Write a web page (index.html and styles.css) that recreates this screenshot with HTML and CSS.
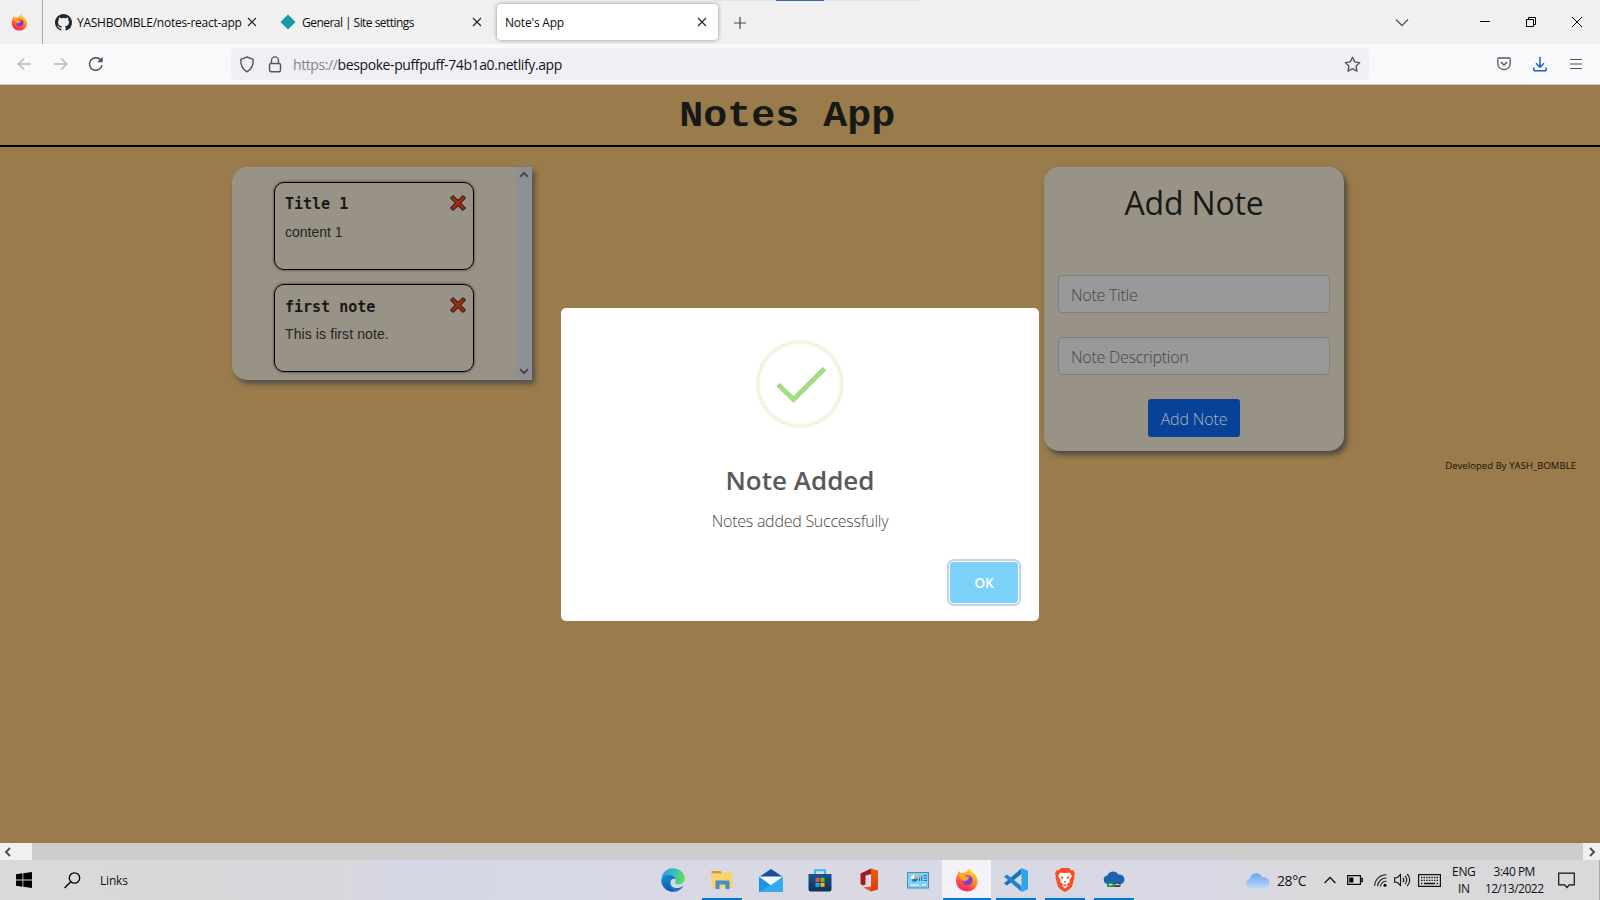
FILE: index.html
```html
<!DOCTYPE html>
<html lang="en">
<head>
<meta charset="utf-8">
<title>Note's App</title>
<link rel="stylesheet" href="styles.css">
</head>
<body>
<svg class="defs" width="0" height="0" aria-hidden="true">
  <defs>
    <linearGradient id="ffBody" x1=".8" y1="0" x2=".3" y2="1"><stop offset="0" stop-color="#ffe83c"/><stop offset=".4" stop-color="#ff9a22"/><stop offset=".75" stop-color="#ff4646"/><stop offset="1" stop-color="#ee247c"/></linearGradient>
    <linearGradient id="ffCore" x1="0" y1="1" x2="1" y2="0"><stop offset="0" stop-color="#5b4bdc"/><stop offset="1" stop-color="#a02bd0"/></linearGradient>
    <linearGradient id="edgeA" x1="0" y1=".2" x2="1" y2=".4"><stop offset="0" stop-color="#239be0"/><stop offset=".5" stop-color="#2fc0c4"/><stop offset="1" stop-color="#5fdc5c"/></linearGradient>
    <linearGradient id="edgeB" x1="0" y1="0" x2=".6" y2="1"><stop offset="0" stop-color="#1694dc"/><stop offset="1" stop-color="#0c4f9e"/></linearGradient>
    <linearGradient id="office" x1="0" y1="0" x2="0" y2="1"><stop offset="0" stop-color="#f0600e"/><stop offset="1" stop-color="#d43d0a"/></linearGradient>
    <linearGradient id="cloud" x1="0" y1="0" x2="0" y2="1"><stop offset="0" stop-color="#6ea4ef"/><stop offset="1" stop-color="#b9d6fa"/></linearGradient>
    <linearGradient id="store" x1="0" y1="0" x2="0" y2="1"><stop offset="0" stop-color="#16568f"/><stop offset="1" stop-color="#12305a"/></linearGradient>
    <symbol id="firefox" viewBox="0 0 24 24">
      <path fill="url(#ffBody)" d="M15.2.8c.2 1.500 1.400 2.600 2.400 3.600 2.300 1.500 4.900 4.600 5 8.300C22.700 19 18 23.400 12 23.400 5.800 23.400 1 18.800 1 12.600c0-3 .8-5.600 2.100-7.400 0-1 .2-1.700.8-2.300.4 1 1 1.600 1.800 2.100 1-.3 2.100-.4 3.200-.2C9.900 4 10.800 3.800 11.600 4c.2-1.700 1.800-2.600 3.600-3.200z"/>
      <path fill="url(#ffCore)" d="M8.300 8.500c2.500-1.500 5.200-1.700 7.300-.3 2.200 1.600 2.700 4.600 1.200 6.800-1.700 2.400-5.100 3-7.600 1.300-1.300-.9-2-2.200-2-3.400 1.800.9 3.700.8 4.700-.4.700-.9 1.700-1.200 1.500-1.800-.4-.9-2.600-.4-3.300-1-.6-.5-.8-1-1.800-1.200z"/>
      <path fill="#ffb52e" d="M2.500 7c2-1.300 4.700-1.300 6.200.3.800.8 2.500 1.100 4.600 1.200 1 .1 1.200 1.500.3 1.900-1.400.6-2 .8-2.300 1.700-2.100.9-4.100.4-5-1z" opacity=".75"/>
    </symbol>
    <symbol id="close" viewBox="0 0 10 10"><path d="M1 1l8 8M9 1l-8 8" fill="none" stroke="#222" stroke-width="1.100"/></symbol>
    <symbol id="cross" viewBox="0 0 18 18"><path d="M4 1.500L9 6.300 14 1.500 16.500 4 11.700 9 16.500 14 14 16.500 9 11.700 4 16.500 1.500 14 6.300 9 1.500 4z" fill="#992b17" stroke="#1c0f0a" stroke-width="1" stroke-linejoin="round"/></symbol>
  </defs>
</svg>
<div class="screen">
  <header class="tabs">
    <div class="pinned"><svg width="17" height="17"><use href="#firefox"/></svg></div>
    <div class="tab tab-github">
      <svg width="17" height="17" viewBox="0 0 16 16"><path fill="#24292f" d="M8 0C3.580 0 0 3.580 0 8c0 3.540 2.290 6.530 5.470 7.590.4.070.55-.17.55-.38 0-.19-.01-.82-.01-1.490-2.010.37-2.530-.49-2.690-.94-.09-.23-.48-.94-.82-1.130-.28-.15-.68-.52-.01-.53.63-.01 1.080.58 1.230.82.72 1.210 1.870.87 2.330.66.07-.52.28-.87.51-1.070-1.780-.2-3.640-.89-3.640-3.950 0-.87.31-1.590.82-2.150-.08-.2-.36-1.020.08-2.120 0 0 .67-.21 2.200.82.64-.18 1.320-.27 2-.27s1.360.09 2 .27c1.530-1.040 2.200-.82 2.200-.82.44 1.100.16 1.920.08 2.120.51.56.82 1.270.82 2.150 0 3.070-1.870 3.750-3.650 3.950.29.25.54.73.54 1.480 0 1.070-.01 1.930-.01 2.200 0 .21.15.46.55.38A8.010 8.010 0 0 0 16 8c0-4.420-3.580-8-8-8z"/></svg>
      <span class="t-github">YASHBOMBLE/notes-react-app</span>
      <svg class="x" width="10" height="10"><use href="#close"/></svg>
    </div>
    <div class="tab tab-netlify">
      <svg width="16" height="16" viewBox="0 0 16 16"><path d="M8 .5L15.500 8 8 15.500.5 8z" fill="#159ba5"/></svg>
      <span class="t-netlify">General | Site settings</span>
      <svg class="x" width="10" height="10"><use href="#close"/></svg>
    </div>
    <div class="tab tab-active"><span class="t-active">Note's App</span><svg class="x" width="10" height="10"><use href="#close"/></svg></div>
    <svg class="plus" width="12" height="12" viewBox="0 0 12 12"><path d="M6 0v12M0 6h12" stroke="#444" stroke-width="1.200"/></svg>
    <div class="window-buttons">
      <svg width="14" height="9" viewBox="0 0 14 9"><path d="M1 1.500l6 6 6-6" fill="none" stroke="#555" stroke-width="1.300"/></svg>
      <svg class="min" width="10" height="10" viewBox="0 0 10 10"><path d="M0 4.500h10" stroke="#000"/></svg>
      <svg class="restore" width="10" height="10" viewBox="0 0 10 10"><path d="M.5 2.500h7v7h-7zM2.500 2.500v-2h7v7h-2" fill="none" stroke="#000"/></svg>
      <svg class="quit" width="10" height="10" viewBox="0 0 10 10"><path d="M0 0l10 10M10 0L0 10" stroke="#000"/></svg>
    </div>
    <i class="edge-line"></i><i class="edge-accent"></i>
  </header>
  <nav class="toolbar">
    <svg class="back" width="15" height="14" viewBox="0 0 15 14"><path d="M7 1.500L1.200 7 7 12.500M1.200 7H14" fill="none" stroke="#b5b5ba" stroke-width="1.300"/></svg>
    <svg class="forward" width="15" height="14" viewBox="0 0 15 14"><path d="M8 1.500L13.800 7 8 12.500M13.800 7H1" fill="none" stroke="#b5b5ba" stroke-width="1.300"/></svg>
    <svg class="reload" width="16" height="16" viewBox="0 0 16 16"><path d="M14 9a6.300 6.300 0 1 1-1.500-5.200" fill="none" stroke="#4b4b53" stroke-width="1.400"/><path d="M14.700.8v5.400H9.300z" fill="#4b4b53"/></svg>
    <div class="address">
      <svg width="16" height="17" viewBox="0 0 16 17"><path d="M8 1l6.200 2.300c.4 5-1.400 9.700-6.200 12.500C3.200 13 1.400 8.300 1.800 3.300z" fill="none" stroke="#55555d" stroke-width="1.400" stroke-linejoin="round"/></svg>
      <svg class="lock" width="14" height="17" viewBox="0 0 14 17"><path d="M3.500 7.500V4.400a3.500 3.500 0 0 1 7 0v3.100" fill="none" stroke="#55555d" stroke-width="1.400"/><rect x="1.500" y="7.500" width="11" height="8.300" rx="1.500" fill="none" stroke="#55555d" stroke-width="1.400"/></svg>
      <span class="url"><span class="scheme">https://</span>bespoke-puffpuff-74b1a0.netlify.app</span>
      <svg class="star" width="17" height="17" viewBox="0 0 17 17"><path d="M8.500 1.300l2.200 4.600 5 .7-3.600 3.500.9 5-4.500-2.400L4 15.100l.9-5L1.300 6.600l5-.7z" fill="none" stroke="#55555d" stroke-width="1.400" stroke-linejoin="round"/></svg>
    </div>
    <div class="tools">
      <svg width="14" height="14" viewBox="0 0 14 14"><path d="M2 1h10a1.200 1.200 0 0 1 1.200 1.200V6.500a6.200 6.200 0 0 1-12.400 0V2.200A1.200 1.200 0 0 1 2 1z" fill="none" stroke="#55555d" stroke-width="1.300"/><path d="M3.800 5L7 8l3.200-3" fill="none" stroke="#55555d" stroke-width="1.400"/></svg>
      <svg width="14" height="16" viewBox="0 0 14 16"><path d="M7 1v10M3 7.300l4 4 4-4M.8 11.500v2a1.200 1.200 0 0 0 1.200 1.200h10a1.200 1.200 0 0 0 1.200-1.200v-2" fill="none" stroke="#1c5fd0" stroke-width="1.500"/></svg>
      <svg width="12" height="12" viewBox="0 0 12 12"><path d="M0 1.500h12M0 6h12M0 10.500h12" stroke="#55555d" stroke-width="1.200"/></svg>
    </div>
  </nav>
  <main class="page">
    <h1><span>Notes App</span></h1>
    <div class="columns">
      <section class="notes">
        <div class="note-list">
          <article class="note"><div><h2>Title 1</h2><p class="body-a">content 1</p></div><svg width="18" height="18"><use href="#cross"/></svg></article>
          <article class="note"><div><h2>first note</h2><p class="body-b">This is first note.</p></div><svg width="18" height="18"><use href="#cross"/></svg></article>
        </div>
        <div class="scroll">
          <svg width="10" height="7" viewBox="0 0 10 7"><path d="M1 5.800L5 1.800l4 4" fill="none" stroke="#444548" stroke-width="1.900"/></svg>
          <svg width="10" height="7" viewBox="0 0 10 7"><path d="M1 1.200l4 4 4-4" fill="none" stroke="#444548" stroke-width="1.900"/></svg>
        </div>
      </section>
      <form class="add">
        <h2>Add Note</h2>
        <div class="field"><span class="ph-title">Note Title</span></div>
        <div class="field"><span class="ph-desc">Note Description</span></div>
        <div class="submit"><span>Add Note</span></div>
      </form>
    </div>
    <footer><span>Developed By YASH_BOMBLE</span></footer>
    <div class="modal">
      <svg class="success" width="88" height="88" viewBox="0 0 88 88"><circle cx="44" cy="44" r="42" fill="none" stroke="#edf7e6" stroke-width="4"/><path d="M22 44.500L37.500 59.500 68.500 28.500" fill="none" stroke="#a5dc86" stroke-width="5"/></svg>
      <h3><span>Note Added</span></h3>
      <p><span>Notes added Successfully</span></p>
      <div class="ok"><span>OK</span></div>
    </div>
  </main>
  <div class="hscroll">
    <div><svg width="8" height="10" viewBox="0 0 8 10"><path d="M6 1L2 5l4 4" fill="none" stroke="#505050" stroke-width="2"/></svg></div>
    <div><svg width="8" height="10" viewBox="0 0 8 10"><path d="M2 1l4 4-4 4" fill="none" stroke="#505050" stroke-width="2"/></svg></div>
  </div>
  <footer class="taskbar">
    <svg class="start" width="16" height="16" viewBox="0 0 16 16"><path d="M0 2.200L6.500 1.300v6.200H0zM7.300 1.200L16 0v7.500H7.300zM0 8.400h6.500v6.300L0 13.800zM7.300 8.400H16V16l-8.700-1.200z"/></svg>
    <svg class="search" width="17" height="17" viewBox="0 0 17 17"><circle cx="10.500" cy="6" r="5.200" fill="none" stroke="#000" stroke-width="1.300"/><path d="M6.800 9.700L.6 16" stroke="#000" stroke-width="1.400"/></svg>
    <span class="links">Links</span>
    <div class="apps">
      <div class="app"><svg width="24" height="24" viewBox="0 0 24 24"><path d="M.5 11C1 4.800 6 .3 12 .3c6.500 0 11.700 4.600 11.700 10.200 0 3.500-2.700 5.900-6 5.900-2.400 0-3.700-.9-3.700-1.700 0-.7.800-1.100.8-2.700C14.800 8.500 11 6.800 7.600 6.800 4.500 6.800 1.900 8.300.5 11z" fill="url(#edgeA)"/><path d="M.3 12C1 8.600 4 6.800 7.600 6.800c3.700 0 6.800 2 7.100 4.400C13 9.800 9.100 11 9.100 15c0 4.400 5 7 9.700 5.300C17 22.600 14.600 23.700 12 23.700 5.500 23.700 0 18.600.3 12z" fill="url(#edgeB)"/><path d="M9.500 13c-1.700 6 6.500 10 13 4.400-2 4-5.500 6-9 6-5.200-1.600-7.400-7-4-10.400z" fill="#1b6fc2"/></svg></div>
      <div class="app on"><svg width="22" height="20" viewBox="0 0 22 20"><path d="M.5 1h9l1.500 2.500H.5z" fill="#d99a1e"/><path d="M.5 4.500L10.500 4 12 2.300h9.500V18H.5z" fill="#fbd268"/><path d="M4.500 19V10.500h14V19h-4v-4.500h-6V19z" fill="#3f8fce"/></svg></div>
      <div class="app"><svg width="24" height="23" viewBox="0 0 24 23"><path d="M0 8L12 0l12 8-12 8z" fill="#164f9c"/><path d="M0 8h24v15H0z" fill="#1e94e0"/><path d="M0 7.500h24L12 16.500z" fill="#f4f6fa"/><path d="M0 23l14.500-8.500L24 8v15z" fill="#35aaec"/></svg></div>
      <div class="app"><svg width="24" height="24" viewBox="0 0 24 24"><path d="M7 7V2.200h10V7" fill="none" stroke="#3cb7ec" stroke-width="2"/><path d="M.5 6h23v15a2.500 2.500 0 0 1-2.500 2.500H3A2.500 2.500 0 0 1 .5 21z" fill="url(#store)"/><path d="M7.500 9.800h4v4h-4z" fill="#f35325"/><path d="M12.500 9.800h4v4h-4z" fill="#81bc06"/><path d="M7.500 14.800h4v4h-4z" fill="#25a7ee"/><path d="M12.500 14.800h4v4h-4z" fill="#ffba08"/></svg></div>
      <div class="app"><svg width="20" height="24" viewBox="0 0 20 24"><path d="M12 .5L19 2.500V21.500L12 23.500z" fill="url(#office)"/><path d="M12 .5V6L6.500 7.500v9L4 17.500 1.500 16V5.500z" fill="#a61b23"/><path d="M4.500 19.500L12 18.500v5z" fill="#e5502c"/></svg></div>
      <div class="app"><svg width="22" height="17" viewBox="0 0 22 17"><rect x=".5" y=".5" width="21" height="15.500" fill="#7dd0f4" stroke="#508cad"/><circle cx="7.500" cy="6.500" r="3.700" fill="#f4fbff"/><path d="M7.500 6.500V2.800a3.700 3.700 0 0 1 3.700 3.700z" fill="#f2a93b"/><path d="M7.500 6.500h3.700A3.700 3.700 0 0 1 4 7.500z" fill="#1c7cc6"/><path d="M12.500 9V5.500M14.500 9V4M16.500 3.500H20M16.500 6H20M16.500 8.500H20" stroke="#296f9e" stroke-width="1"/><path d="M3 13h9M15 13h4" stroke="#fff" stroke-width="1.200"/></svg></div>
      <div class="app current on"><svg width="24" height="24"><use href="#firefox"/></svg></div>
      <div class="app on"><svg width="24" height="24" viewBox="0 0 24 24"><path d="M17.500 6L3 17.500 0 15.500 17.500.2z" fill="#1374b8"/><path d="M17.500 18L3 6.500 0 8.500l17.500 15.300z" fill="#1b84cc"/><path d="M17.500 0L24 2.800v18.400L17.500 24z" fill="#2ba6ec"/></svg></div>
      <div class="app on"><svg width="20" height="24" viewBox="0 0 20 24"><path d="M6 0h8l2.200 2.300 2-.2L20 5.200l-.8 2.300.3 2-2.300 8.500c-.8 2.500-5 4.800-7.200 6-2.200-1.200-6.400-3.500-7.200-6L.5 9.500l.3-2L0 5.200l1.800-3.100 2 .2z" fill="#fb4f22"/><path d="M5.500 4.500l2.500.5h4l2.500-.5 2.500 3.500-2.700 4 .5 2-3 2.500 1.200 1.500L10 20.500 7 18l1.200-1.500-3-2.500.5-2L3 8z" fill="#fff"/><path d="M5.500 8l3 1-1 2.700zM14.500 8l-3 1 1 2.700zM9 13h2l-1 2.500zM8 17.300l2-1 2 1-2 1z" fill="#fb4f22"/></svg></div>
      <div class="app on"><svg width="22" height="18" viewBox="0 0 22 18"><path d="M4.500 13A4.300 4.300 0 0 1 4.300 4.500C6-.2 13-.9 15.300 3.500 19 3.200 21.500 5.500 21.500 8.500c0 2.600-2 4.500-4.500 4.500z" fill="#1c64ae"/><rect x="10.500" y="11.500" width="7" height="4.500" rx="1" fill="#34435a"/><rect x="4" y="11.500" width="7.500" height="4.500" rx="1" fill="#189b4c"/><path d="M6 13.700h3.500M12 14l2-1 2.500 1" stroke="#fff" fill="none"/></svg></div>
    </div>
    <div class="tray">
      <svg class="weather" width="25" height="17" viewBox="0 0 25 17"><path d="M5 16a4.600 4.600 0 0 1-.3-9C6 .5 14.500-1.200 17 5.300c4-.6 7.500 1.800 7.500 5.500 0 3-2.300 5.200-5 5.200z" fill="url(#cloud)"/></svg>
      <span class="temp">28°C</span>
      <svg class="up" width="12" height="8" viewBox="0 0 12 8"><path d="M.6 7L6 1.500 11.400 7" fill="none" stroke="#111" stroke-width="1.300"/></svg>
      <svg class="battery" width="16" height="10" viewBox="0 0 16 10"><path d="M.7.700h12.800v8.600H.7zM14 3.500h1.200v3H14" fill="none" stroke="#111" stroke-width="1.300"/><path d="M2.300 2.500h4v5h-4z"/></svg>
      <svg class="wifi" width="13" height="13" viewBox="0 0 13 13"><path d="M.7 12A11.300 11.300 0 0 1 12.500.8M3.600 12.300A8.500 8.500 0 0 1 12.600 4M6.500 12.500a5.500 5.500 0 0 1 6-5.200" fill="none" stroke="#222" stroke-width="1.100"/><circle cx="11" cy="11.200" r="1.500"/></svg>
      <svg class="sound" width="17" height="14" viewBox="0 0 17 14"><path d="M.6 4.700h2.600L6.500 1.500v11L3.200 9.300H.6zM8.800 4.800c1.200 1.300 1.200 3.100 0 4.400M11 2.900c2.300 2.300 2.300 5.900 0 8.200M13.200 1c3.400 3.300 3.400 8.700 0 12" fill="none" stroke="#111" stroke-width="1.100"/></svg>
      <svg class="keyboard" width="23" height="13" viewBox="0 0 23 13"><rect x=".6" y=".6" width="21.800" height="11.800" fill="none" stroke="#111" stroke-width="1.200"/><path d="M3 3.500h17M3 6.300h17" stroke="#111" stroke-width="1.300" stroke-dasharray="1.400 1.200"/><path d="M3 9.500h1.400M6 9.500h11M18.600 9.500H20" stroke="#111" stroke-width="1.300"/></svg>
      <div class="stack lang"><span>ENG</span><span>IN</span></div>
      <div class="stack clock"><span class="time">3:40 PM</span><span class="date">12/13/2022</span></div>
      <svg class="bubble" width="17" height="17" viewBox="0 0 17 17"><path d="M.7 1.200h15.600v11.600h-5l-2.300 2.700-2.300-2.700h-6z" fill="none" stroke="#111" stroke-width="1.200"/></svg>
    </div>
  </footer>
</div>
</body>
</html>
```
FILE: styles.css
```css
* { box-sizing: border-box; }
body { margin: 0; overflow: hidden; font-family: "Open Sans", "Noto Sans", sans-serif; }
h1, h2, h3, p { margin: 0; font-weight: 400; }
svg { display: block; flex: none; }
span { white-space: nowrap; }
.defs { position: absolute; }
.screen { width: 1600px; height: 900px; display: flex; flex-direction: column; overflow: hidden; }

/* Tab strip */
.tabs { position: relative; height: 44px; flex: none; display: flex; align-items: center; background: #f0f0f0; font-size: 12px; color: #0c0c0d; }
.pinned { width: 43px; height: 44px; padding: 14px 0 0 11px; border-right: 1px solid #aaa; }
.tab { height: 36px; display: flex; align-items: center; }
.tab .x { margin-left: auto; }
.tab-github { width: 203px; margin-left: 12px; gap: 5px; padding-right: 1px; }
.tab-netlify { width: 202px; margin-left: 22px; gap: 6px; }
.tab-active { width: 221px; margin-left: 15px; padding: 0 11px 0 8px; background: #fff; border-radius: 4px; box-shadow: 0 0 4px rgba(0,0,0,.4); }
.t-github { letter-spacing: -.26px; }
.t-netlify { letter-spacing: -.54px; }
.t-active { letter-spacing: -.2px; }
.plus { margin: 1px 0 0 16px; }
.window-buttons { margin-left: auto; display: flex; align-items: center; padding-right: 18px; }
.min { margin-left: 71px; }
.restore { margin-left: 36px; }
.quit { margin-left: 36px; }
.edge-line { position: absolute; left: 710px; top: 0; width: 212px; height: 1px; background: #e4e4e4; }
.edge-accent { position: absolute; left: 776px; top: 0; width: 48px; height: 1px; background: #2c6cab; }

/* Navigation bar */
.toolbar { height: 41px; flex: none; display: flex; align-items: center; background: #f9f9fb; border-bottom: 1px solid #ccc8c0; padding-left: 17px; }
.forward { margin-left: 21px; }
.reload { margin-left: 20px; }
.address { width: 1138px; height: 32px; margin-left: 127px; padding: 0 8px 0 8px; display: flex; align-items: center; background: #f0eff4; border-radius: 4px; }
.lock { margin-left: 13px; }
.url { margin: 1px 0 0 11px; font-size: 14px; letter-spacing: -.4px; color: #15141a; }
.scheme { color: #85848c; }
.star { margin-left: auto; }
.tools { flex: 1; display: flex; align-items: center; justify-content: flex-end; gap: 22px; padding-right: 18px; }
.tools svg:nth-child(-n+2) { margin-right: 1px; margin-left: -1px; }

/* Notes page */
.page { position: relative; height: 758px; flex: none; background: #997b4c; color: #171916; }
h1 { height: 62px; padding: 5px 25px 0 0; border-bottom: 2px solid #000; text-align: center; font: bold 36px/54px "Liberation Mono", monospace; }
h1 span { display: inline-block; transform: scaleX(1.111); }
.columns { display: flex; justify-content: space-between; align-items: flex-start; padding: 20px 256px 0 232px; }
.notes { width: 300px; height: 213px; display: flex; background: #999287; border-radius: 15px 0 0 15px; box-shadow: 3px 4px 5px #55504a; }
.note-list { flex: 1; padding: 15px 41px 0 42px; display: flex; flex-direction: column; gap: 14px; }
.note { width: 200px; height: 88px; display: flex; justify-content: space-between; padding: 11px 6px 0 10px; border: 1px solid #000; border-radius: 10px; box-shadow: 0 0 3px #38342e; }
.note h2 { font: bold 15px/21px "DejaVu Sans Mono", monospace; }
.note:nth-child(2) h2 { padding-top: 1px; margin-bottom: -1px; }
.note p { margin-top: 8px; font: 14px/18px "Liberation Sans", sans-serif; color: #25251f; }
.body-b { letter-spacing: .1px; }
.scroll { width: 17px; background: #8e9095; display: flex; flex-direction: column; align-items: center; justify-content: space-between; padding: 4px 0 5px; }
.add { width: 300px; height: 284px; padding: 12px 14px 0; background: #999287; border-radius: 15px; box-shadow: 3px 4px 5px #4f4b45; display: flex; flex-direction: column; align-items: center; }
.add h2 { height: 96px; font-size: 32px; line-height: 48px; letter-spacing: -.15px; }
.field { width: 272px; height: 38px; margin-bottom: 24px; padding: 2px 12px 0; display: flex; align-items: center; border: 1px solid #7d8084; border-radius: 4px; background: #999; font-size: 16px; font-weight: 300; letter-spacing: -.25px; color: #41464a; }
.submit { width: 92px; height: 38px; padding-top: 2px; display: flex; align-items: center; justify-content: center; border-radius: 3px; background: #084298; color: #adb2bd; font-size: 16px; font-weight: 300; letter-spacing: -.15px; }
.page footer { display: flex; justify-content: flex-end; padding: 8px 24px 0 0; font-size: 9.500px; line-height: 13px; letter-spacing: .06px; color: #181005; }

/* Alert */
.modal { position: absolute; left: 561px; top: 223px; width: 478px; height: 313px; display: flex; flex-direction: column; align-items: center; background: #fff; border-radius: 5px; }
.success { margin-top: 32px; }
.modal h3 { margin-top: 33px; font-size: 26px; line-height: 39px; font-weight: 600; color: #595959; }
.modal p { margin-top: 9px; font-size: 16px; line-height: 24px; font-weight: 300; letter-spacing: -.25px; color: #484848; }
.ok { width: 68px; height: 41px; margin: 29px 21px 0 auto; display: flex; align-items: center; justify-content: center; background: #7cd1f9; border-radius: 4px; box-shadow: 0 0 0 1px #fff, 0 0 0 3px #bfd4e6; color: #fff; font-size: 13.500px; font-weight: 600; }

/* Horizontal scrollbar */
.hscroll { height: 17px; flex: none; display: flex; justify-content: space-between; background: #cdcdcd; }
.hscroll div { height: 17px; background: #f0f0f0; display: flex; align-items: center; }
.hscroll div:first-child { width: 32px; padding-left: 4px; }
.hscroll div:last-child { width: 17px; padding-left: 5px; }

/* Taskbar */
.taskbar { position: relative; height: 40px; flex: none; display: flex; align-items: center; padding-left: 16px; background: linear-gradient(90deg, #d9d9db 0, #d8d8dc 340px, #d6d7e6 400px, #d9d9e4 800px, #d8d8e5 1200px, #d9d9dc 1300px); color: #111; }
.search { margin-left: 32px; }
.links { margin-left: 19px; font-size: 12px; letter-spacing: -.2px; }
.apps { display: flex; margin-left: auto; }
.app { width: 49px; height: 40px; display: flex; align-items: center; justify-content: center; }
.on { background: linear-gradient(#0078d7, #0078d7) center bottom / 40px 2px no-repeat; }
.current { background: linear-gradient(#0078d7, #0078d7) center bottom / 48px 2px no-repeat, #f2f2f8; }
.tray { width: 462px; padding-left: 107px; display: flex; align-items: center; box-shadow: inset -4px 0 0 -3px #aaa; height: 40px; }
.temp { margin-left: 7px; font-size: 14px; letter-spacing: -.4px; }
.up { margin-left: 18px; }
.battery { margin-left: 11px; }
.wifi { margin-left: 11px; }
.sound { margin-left: 7px; }
.keyboard { margin-left: 7px; }
.stack { display: flex; flex-direction: column; align-items: center; font-size: 12px; line-height: 17.500px; }
.lang { width: 25px; margin-left: 10px; letter-spacing: -.4px; }
.clock { width: 60px; margin-left: 8px; letter-spacing: -.5px; }
.bubble { margin-left: 14px; }
```
